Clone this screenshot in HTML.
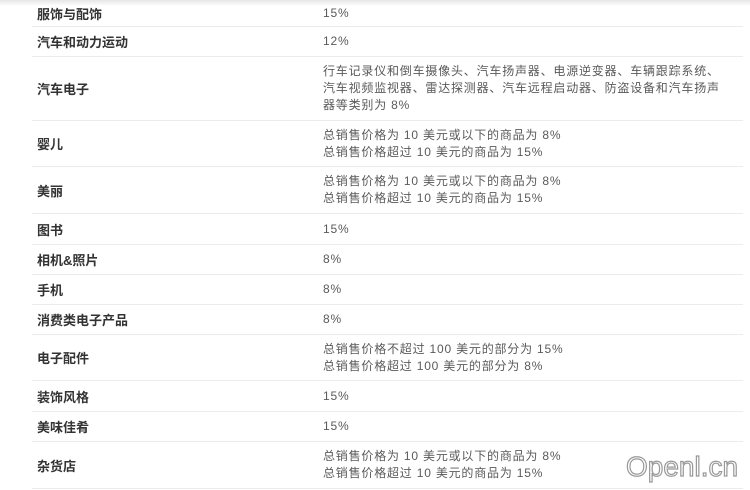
<!DOCTYPE html>
<html><head><meta charset="utf-8"><style>
body{margin:0;width:750px;height:490px;background:#fff;position:relative;overflow:hidden;font-family:"Liberation Sans","Noto Sans CJK SC",sans-serif}
.top{position:absolute;left:0;top:0;width:750px;height:6px;background:linear-gradient(#e6e6e6,#fff)}
.r{position:absolute;left:32px;width:711px;border-bottom:1px solid #ececec;display:flex;align-items:center}
.l{position:absolute;left:5px;font-size:13px;font-weight:bold;color:#333}
.v{position:absolute;left:291px;font-size:12px;color:#5a5a5a;line-height:17px;letter-spacing:0.8px;white-space:nowrap}
.wm{position:absolute;left:626px;top:451px;font-size:28px;color:#fff;-webkit-text-stroke:1.2px #999}
</style></head><body>
<div class="top"></div>
<div class="r" style="top:0;height:26px"><span class="l">服饰与配饰</span><span class="v">15%</span></div>
<div class="r" style="top:27px;height:29px"><span class="l">汽车和动力运动</span><span class="v">12%</span></div>
<div class="r" style="top:57px;height:63px"><span class="l">汽车电子</span><span class="v">行车记录仪和倒车摄像头、汽车扬声器、电源逆变器、车辆跟踪系统、<br>汽车视频监视器、雷达探测器、汽车远程启动器、防盗设备和汽车扬声<br>器等类别为 8%</span></div>
<div class="r" style="top:121px;height:45px"><span class="l">婴儿</span><span class="v">总销售价格为 10 美元或以下的商品为 8%<br>总销售价格超过 10 美元的商品为 15%</span></div>
<div class="r" style="top:167px;height:46px"><span class="l">美丽</span><span class="v">总销售价格为 10 美元或以下的商品为 8%<br>总销售价格超过 10 美元的商品为 15%</span></div>
<div class="r" style="top:214px;height:30px"><span class="l">图书</span><span class="v">15%</span></div>
<div class="r" style="top:245px;height:29px"><span class="l">相机&amp;照片</span><span class="v">8%</span></div>
<div class="r" style="top:275px;height:29px"><span class="l">手机</span><span class="v">8%</span></div>
<div class="r" style="top:305px;height:29px"><span class="l">消费类电子产品</span><span class="v">8%</span></div>
<div class="r" style="top:335px;height:45px"><span class="l">电子配件</span><span class="v">总销售价格不超过 100 美元的部分为 15%<br>总销售价格超过 100 美元的部分为 8%</span></div>
<div class="r" style="top:381px;height:30px"><span class="l">装饰风格</span><span class="v">15%</span></div>
<div class="r" style="top:412px;height:29px"><span class="l">美味佳肴</span><span class="v">15%</span></div>
<div class="r" style="top:442px;height:46px"><span class="l">杂货店</span><span class="v">总销售价格为 10 美元或以下的商品为 8%<br>总销售价格超过 10 美元的商品为 15%</span></div>
<div class="wm">Openl.cn</div>
</body></html>
